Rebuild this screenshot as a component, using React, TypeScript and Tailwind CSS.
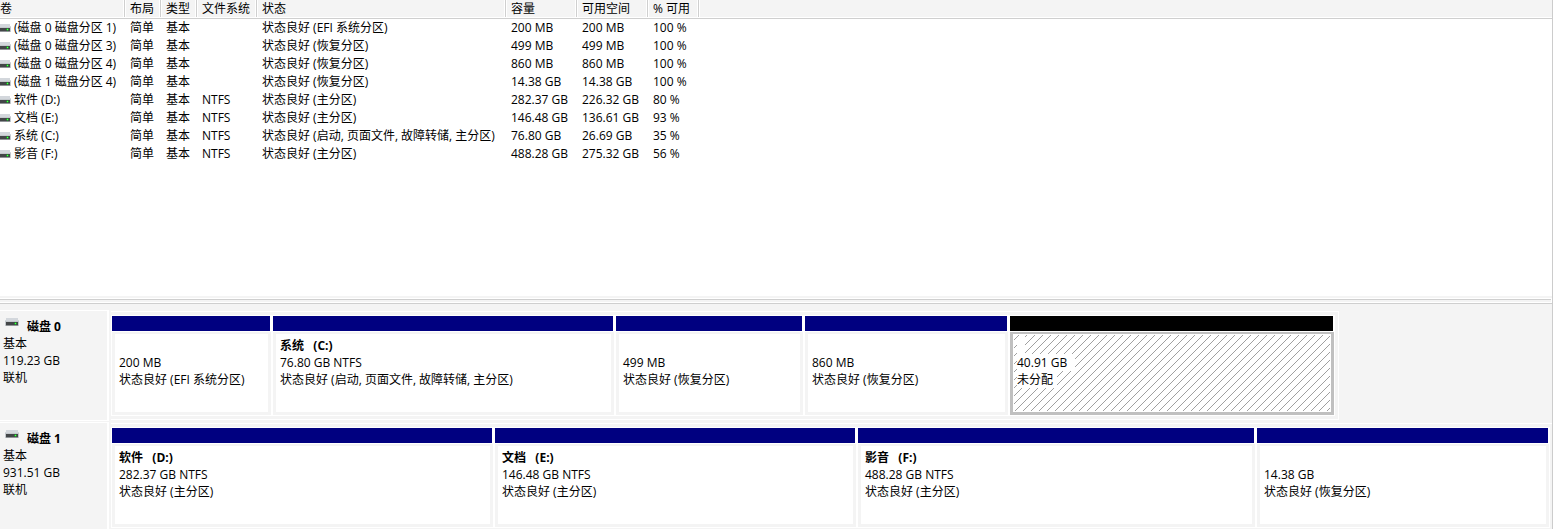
type Volume = {
  name: string;
  layout: string;
  type: string;
  fs: string;
  status: string;
  capacity: string;
  free: string;
  percent: string;
};

type Partition = {
  name: string;
  size: string;
  status: string;
  weight: number;
  unallocated?: boolean;
};

type Disk = {
  name: string;
  type: string;
  size: string;
  state: string;
  weight: number;
  partitions: Partition[];
};

const FULL_WEIGHT = 1441;

const vol = (
  name: string,
  fs: string,
  status: string,
  capacity: string,
  free: string,
  percent: string,
): Volume => ({ name, layout: "简单", type: "基本", fs, status, capacity, free, percent });

const volumes: Volume[] = [
  vol("(磁盘 0 磁盘分区 1)", "", "状态良好 (EFI 系统分区)", "200 MB", "200 MB", "100 %"),
  vol("(磁盘 0 磁盘分区 3)", "", "状态良好 (恢复分区)", "499 MB", "499 MB", "100 %"),
  vol("(磁盘 0 磁盘分区 4)", "", "状态良好 (恢复分区)", "860 MB", "860 MB", "100 %"),
  vol("(磁盘 1 磁盘分区 4)", "", "状态良好 (恢复分区)", "14.38 GB", "14.38 GB", "100 %"),
  vol("软件 (D:)", "NTFS", "状态良好 (主分区)", "282.37 GB", "226.32 GB", "80 %"),
  vol("文档 (E:)", "NTFS", "状态良好 (主分区)", "146.48 GB", "136.61 GB", "93 %"),
  vol("系统 (C:)", "NTFS", "状态良好 (启动, 页面文件, 故障转储, 主分区)", "76.80 GB", "26.69 GB", "35 %"),
  vol("影音 (F:)", "NTFS", "状态良好 (主分区)", "488.28 GB", "275.32 GB", "56 %"),
];

const disks: Disk[] = [
  {
    name: "磁盘 0",
    type: "基本",
    size: "119.23 GB",
    state: "联机",
    weight: 1228,
    partitions: [
      { name: "", size: "200 MB", status: "状态良好 (EFI 系统分区)", weight: 159 },
      { name: "系统   (C:)", size: "76.80 GB NTFS", status: "状态良好 (启动, 页面文件, 故障转储, 主分区)", weight: 341 },
      { name: "", size: "499 MB", status: "状态良好 (恢复分区)", weight: 187 },
      { name: "", size: "860 MB", status: "状态良好 (恢复分区)", weight: 203 },
      { name: "", size: "40.91 GB", status: "未分配", weight: 324, unallocated: true },
    ],
  },
  {
    name: "磁盘 1",
    type: "基本",
    size: "931.51 GB",
    state: "联机",
    weight: FULL_WEIGHT,
    partitions: [
      { name: "软件   (D:)", size: "282.37 GB NTFS", status: "状态良好 (主分区)", weight: 381 },
      { name: "文档   (E:)", size: "146.48 GB NTFS", status: "状态良好 (主分区)", weight: 361 },
      { name: "影音   (F:)", size: "488.28 GB NTFS", status: "状态良好 (主分区)", weight: 397 },
      { name: "", size: "14.38 GB", status: "状态良好 (恢复分区)", weight: 292 },
    ],
  },
];

const columns = [
  { title: "卷", width: "w-[126px]" },
  { title: "布局", width: "w-[36px]" },
  { title: "类型", width: "w-[36px]" },
  { title: "文件系统", width: "w-[60px]" },
  { title: "状态", width: "w-[249px]" },
  { title: "容量", width: "w-[71px]" },
  { title: "可用空间", width: "w-[71px]" },
  { title: "% 可用", width: "w-[51px]" },
];

function DriveIcon({ clipped = false }: { clipped?: boolean }) {
  return (
    <svg
      className="block h-[9px] shrink-0"
      width={clipped ? 11 : 14}
      height={9}
      viewBox={clipped ? "3 0 11 9" : "0 0 14 9"}
      shapeRendering="crispEdges"
      aria-hidden="true"
    >
      <path d="M1 0H13L14 4H0Z" fill="#d3d7dc" />
      <rect x="0" y="3" width="14" height="5" fill="#c3c8cc" />
      <rect x="1" y="4" width="12" height="3" fill="#434648" />
      <rect x="1" y="7" width="12" height="1" fill="#8f9396" />
      <rect x="9" y="5" width="3" height="1" fill="#1fa02a" />
      <rect x="10" y="4" width="1" height="3" fill="#1fa02a" />
      <rect x="10" y="5" width="1" height="1" fill="#4dff4d" />
    </svg>
  );
}

function Hatch() {
  const dots = Array.from({ length: 8 }, (_, x) => ({ x, y: (12 - x) % 8 }));
  return (
    <svg className="absolute inset-px h-[calc(100%-2px)] w-[calc(100%-2px)]" aria-hidden="true">
      <defs>
        <pattern id="hatch" width="8" height="8" patternUnits="userSpaceOnUse">
          {dots.map((d) => (
            <rect key={d.x} x={d.x} y={d.y} width="1" height="1" fill="#a0a0a0" />
          ))}
        </pattern>
      </defs>
      <rect width="100%" height="100%" fill="url(#hatch)" />
    </svg>
  );
}

function VolumeTable() {
  return (
    <table className="w-full table-fixed border-collapse text-left">
      <thead>
        <tr className="h-[19px] bg-[#f4f4f4] shadow-[inset_0_-1px_#cfcfcf,inset_0_-2px_#ffffff]">
          {columns.map((c, i) => (
            <th
              key={c.title}
              scope="col"
              className={`${c.width} ${i === 0 ? "pl-0" : "pl-1"} pt-0 pr-0 pb-[2px] font-normal leading-[17px] whitespace-nowrap bg-[linear-gradient(to_right,#ffffff_1px,#cfcfcf_1px,#cfcfcf_2px,#ffffff_2px)] bg-[length:3px_17px] bg-right-top bg-no-repeat`}
            >
              {c.title}
            </th>
          ))}
          <td className="p-0" />
        </tr>
      </thead>
      <tbody>
        {volumes.map((v) => (
          <tr key={v.name} className="h-[18px] whitespace-nowrap leading-[18px]">
            <td className="p-0">
              <div className="flex items-center gap-[3px]">
                <DriveIcon clipped />
                <span>{v.name}</span>
              </div>
            </td>
            {[v.layout, v.type, v.fs, v.status, v.capacity, v.free, v.percent].map((text, i) => (
              <td key={i} className="py-0 pr-0 pl-1">
                {text}
              </td>
            ))}
            <td className="p-0" />
          </tr>
        ))}
      </tbody>
    </table>
  );
}

function PartitionBlock({ part }: { part: Partition }) {
  const free = part.unallocated;
  return (
    <div
      className="flex min-w-0 basis-0 flex-col gap-px overflow-hidden"
      style={{ flexGrow: part.weight }}
    >
      <div className={`mr-px h-[15px] ${free ? "bg-black" : "bg-[#000080]"}`} />
      <div
        className={`relative h-[83px] border-x-[3px] border-t-2 border-b-[3px] bg-white pt-[3px] pl-1 leading-[17px] whitespace-pre ${
          free ? "border-[#c0c0c0]" : "border-[#f4f4f4]"
        }`}
      >
        {free && <Hatch />}
        <div className="relative flex flex-col items-start">
          <p className={`h-[17px] font-bold ${free ? "w-2 bg-white" : ""}`}>{part.name}</p>
          <p className={free ? "bg-white pr-2" : ""}>{part.size}</p>
          <p className={free ? "bg-white pr-1" : ""}>{part.status}</p>
        </div>
      </div>
    </div>
  );
}

function DiskRow({ disk }: { disk: Disk }) {
  const full = disk.weight === FULL_WEIGHT;
  return (
    <section className="flex shrink-0" aria-label={disk.name}>
      <div className="w-[109px] shrink-0 border-t border-r-2 border-b border-white pt-[7px] pl-[3px] leading-[17px]">
        <h2 className="flex gap-2 pl-[2px] font-bold">
          <DriveIcon />
          {disk.name}
        </h2>
        <p>{disk.type}</p>
        <p>{disk.size}</p>
        <p>{disk.state}</p>
      </div>
      <div className="flex min-w-0 grow py-px pl-[2px]">
        <div className="min-w-0 basis-0" style={{ flexGrow: disk.weight }}>
          <div
            className={`border-y border-white py-[3px] ${full ? "pr-[2px]" : "border-r pr-[3px]"}`}
          >
            <div className="flex gap-[2px] bg-white p-px">
              {disk.partitions.map((p, i) => (
                <PartitionBlock key={i} part={p} />
              ))}
            </div>
          </div>
        </div>
        <div className="basis-0" style={{ flexGrow: FULL_WEIGHT - disk.weight }} />
      </div>
    </section>
  );
}

export default function App() {
  return (
    <main className="flex h-screen flex-col overflow-hidden border-r border-[#cccccc] bg-[#f4f4f4] font-['Open_Sans','Noto_Sans_CJK_SC',sans-serif] text-[12px] text-black">
      <div className="min-h-[296px] shrink-0 bg-white">
        <VolumeTable />
      </div>
      <div className="shrink-0 pt-[2px]">
        <div className="border-t border-r border-white pb-px">
          <div className="border-t border-[#cfcfcf] pb-px" />
        </div>
        <div className="border-t border-b border-t-white border-b-[#cfcfcf]" />
      </div>
      <div className="flex flex-col gap-px pt-[6px]">
        {disks.map((d) => (
          <DiskRow key={d.name} disk={d} />
        ))}
      </div>
    </main>
  );
}
